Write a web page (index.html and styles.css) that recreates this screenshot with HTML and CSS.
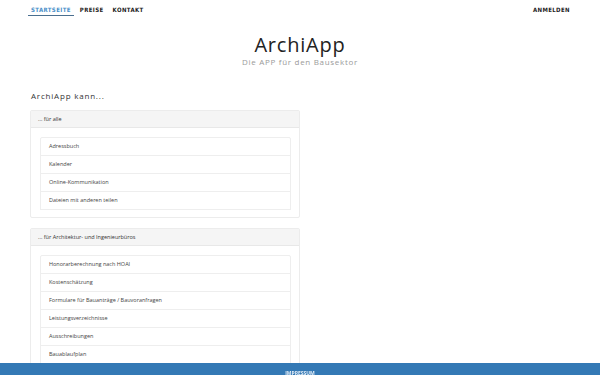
FILE: index.html
```html
<!DOCTYPE html>
<html lang="de">

<head>
    <meta charset="UTF-8">
    <meta name="viewport" content="width=device-width, initial-scale=1.0">
    <title>ArchiApp - Die APP für den Bausektor</title>
    <link rel="stylesheet" href="styles.css">
</head>

<body>
    <!-- Navbar -->
    <nav class="navbar">
        <ul class="nav-left">
            <li><a href="#" class="active">Startseite</a></li>
            <li><a href="#">Preise</a></li>
            <li><a href="#">Kontakt</a></li>
        </ul>
        <ul class="nav-right">
            <li><a href="#">Anmelden</a></li>
        </ul>
    </nav>

    <!-- Header -->
    <header class="page-header">
        <h1 class="app-title">ArchiApp</h1>
        <p class="app-subtitle">Die APP für den Bausektor</p>
    </header>

    <main class="content">
        <h2 class="section-title">ArchiApp kann...</h2>

        <!-- Panel: alle -->
        <div class="panel">
            <div class="panel-heading">... für alle</div>
            <div class="panel-body">
                <ul class="list-group">
                    <li>Adressbuch</li>
                    <li>Kalender</li>
                    <li>Online-Kommunikation</li>
                    <li>Dateien mit anderen teilen</li>
                </ul>
            </div>
        </div>

        <!-- Panel: Architektur -->
        <div class="panel">
            <div class="panel-heading">... für Architektur- und Ingenieurbüros</div>
            <div class="panel-body">
                <ul class="list-group">
                    <li>Honorarberechnung nach HOAI</li>
                    <li>Kostenschätzung</li>
                    <li>Formulare für Bauanträge / Bauvoranfragen</li>
                    <li>Leistungsverzeichnisse</li>
                    <li>Ausschreibungen</li>
                    <li>Bauablaufplan</li>
                </ul>
            </div>
        </div>
    </main>

    <!-- Footer -->
    <footer class="footer">
        <a href="#">Impressum</a>
    </footer>
</body>

</html>
```

FILE: styles.css
```css
/* General Styles */
* {
    margin: 0;
    padding: 0;
    box-sizing: border-box;
}

body {
    font-family: "Open Sans", Arial, sans-serif;
    background-color: #ffffff;
    color: #333333;
    overflow: hidden;
}

/* Navbar */
.navbar {
    display: flex;
    justify-content: space-between;
    align-items: center;
    height: 20px;
    padding: 0 30px 0 28px;
}

.navbar ul {
    list-style-type: none;
    display: flex;
    gap: 3px;
}

.navbar a {
    display: block;
    font-family: "DejaVu Sans Condensed", "DejaVu Sans", sans-serif;
    font-size: 6px;
    font-weight: bold;
    letter-spacing: 0.4px;
    text-transform: uppercase;
    color: #222222;
    text-decoration: none;
    padding: 2px 3px;
    border-bottom: 1px solid transparent;
}

.navbar a.active {
    color: #4a90c9;
    border-bottom-color: #4a6f8f;
}

.nav-right a {
    padding-right: 0;
}

/* Header */
.page-header {
    text-align: center;
    padding-top: 15px;
}

.app-title {
    font-size: 20px;
    font-weight: normal;
    line-height: 20px;
    letter-spacing: 0.8px;
    color: #222222;
}

.app-subtitle {
    font-size: 8px;
    line-height: 12px;
    letter-spacing: 0.7px;
    color: #9a9a9a;
    margin-top: 1px;
}

/* Content */
.content {
    padding: 0 30px;
}

.section-title {
    font-size: 8px;
    font-weight: normal;
    line-height: 12px;
    letter-spacing: 0.8px;
    color: #333333;
    margin: 22px 0 8px 1px;
}

/* Panels */
.panel {
    width: 270px;
    border: 1px solid #ececec;
    border-radius: 2px;
    margin-bottom: 10px;
    background: #ffffff;
}

.panel-heading {
    font-size: 5.5px;
    line-height: 16px;
    padding: 0 7px;
    background-color: #f5f5f5;
    border-bottom: 1px solid #e8e8e8;
    color: #333333;
}

.panel-body {
    padding: 9px 8px 8px 9px;
}

/* List Group */
.list-group {
    list-style-type: none;
}

.list-group li {
    font-size: 5.5px;
    line-height: 17px;
    padding: 0 8px;
    border: 1px solid #eeeeee;
    margin-bottom: -1px;
    color: #444444;
}

.list-group li:first-child {
    border-radius: 2px 2px 0 0;
}

/* Footer */
.footer {
    position: fixed;
    left: 0;
    bottom: 0;
    width: 100%;
    height: 12px;
    background-color: #3479b5;
    text-align: center;
    line-height: 12px;
}

.footer a {
    font-size: 5px;
    font-weight: bold;
    text-transform: uppercase;
    color: #e8f0f8;
    text-decoration: none;
}
```
